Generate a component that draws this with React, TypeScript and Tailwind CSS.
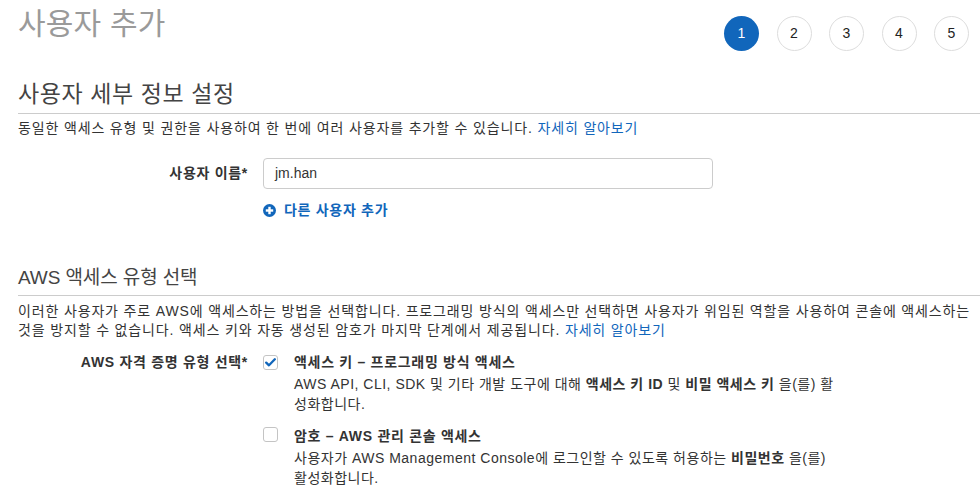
import React from 'react';

const BLUE = 'text-[#1166bb]';

function StepCircles() {
  return (
    <div className="mt-[16px] flex gap-[17.5px] pr-[11px] tracking-normal">
      {[1, 2, 3, 4, 5].map((n) => (
        <div
          key={n}
          className={
            n === 1
              ? 'flex h-[35px] w-[35px] items-center justify-center rounded-full bg-[#1166bb] text-[14px] text-white'
              : 'flex h-[35px] w-[35px] items-center justify-center rounded-full border border-[#dddddd] bg-white text-[14px] text-[#222]'
          }
        >
          {n}
        </div>
      ))}
    </div>
  );
}

function PlusCircle() {
  return (
    <svg width="13" height="13" viewBox="0 0 13 13" className="shrink-0">
      <circle cx="6.5" cy="6.5" r="6.5" fill="#1166bb" />
      <rect x="5.3" y="2.8" width="2.4" height="7.4" fill="#fff" />
      <rect x="2.8" y="5.3" width="7.4" height="2.4" fill="#fff" />
    </svg>
  );
}

function Checkbox({ checked }: { checked?: boolean }) {
  return (
    <div className="flex h-[15px] w-[15px] shrink-0 items-center justify-center rounded-[3px] border border-[#c4c4c4] bg-white">
      {checked && (
        <svg width="11" height="9" viewBox="0 0 11 9">
          <path d="M1.2 4.6 L4 7.3 L9.8 1.3" fill="none" stroke="#1166bb" strokeWidth="2.3" strokeLinecap="round" strokeLinejoin="round" />
        </svg>
      )}
    </div>
  );
}

export default function App() {
  return (
    <div className="min-h-[495px] w-[980px] overflow-hidden bg-white pl-[18px] font-['Liberation_Sans','Noto_Sans_CJK_KR',sans-serif] text-[14px] tracking-[0.7px] text-[#333]">
      {/* header with steps */}
      <div className="flex items-start justify-between">
        <h1 className="pt-[5px] text-[30px] leading-[38px] font-normal tracking-[0.2px] text-[#9a9a9a]">사용자 추가</h1>
        <StepCircles />
      </div>

      {/* user details */}
      <div className="mt-[28px] border-b border-[#cccccc] pb-[4px]">
        <h2 className="text-[23px] leading-[30px] tracking-[0.6px] text-[#444]">사용자 세부 정보 설정</h2>
      </div>
      <p className="mt-[4px] leading-[20px] tracking-[0.85px]">
        동일한 액세스 유형 및 권한을 사용하여 한 번에 여러 사용자를 추가할 수 있습니다.{' '}
        <a className={BLUE}>자세히 알아보기</a>
      </p>

      <div className="mt-[20px] flex items-center gap-[15px]">
        <label className="w-[230px] text-right font-bold text-[#333]">사용자 이름*</label>
        <div className="flex h-[31px] w-[450px] items-center rounded-[4px] border border-[#cccccc] px-[11px] text-[14px] tracking-normal text-[#333]">
          jm.han
        </div>
      </div>

      <div className="mt-[11px] flex items-center gap-[8px] pl-[245px] leading-[20px]">
        <PlusCircle />
        <span className={`${BLUE} font-bold`}>다른 사용자 추가</span>
      </div>

      {/* access type */}
      <div className="mt-[45px] border-b border-[#cccccc] pb-[4px]">
        <h2 className="text-[19px] leading-[26px] tracking-[-0.1px] text-[#444]">AWS 액세스 유형 선택</h2>
      </div>
      <p className="mt-[6px] leading-[19px] tracking-[0.85px] whitespace-nowrap">
        이러한 사용자가 주로 AWS에 액세스하는 방법을 선택합니다. 프로그래밍 방식의 액세스만 선택하면 사용자가 위임된 역할을 사용하여 콘솔에 액세스하는
        <br />
        것을 방지할 수 없습니다. 액세스 키와 자동 생성된 암호가 마지막 단계에서 제공됩니다. <a className={BLUE}>자세히 알아보기</a>
      </p>

      <div className="mt-[12px] flex items-start gap-[15px]">
        <div className="w-[230px] text-right leading-[20px] font-bold">AWS 자격 증명 유형 선택*</div>
        <div className="flex flex-col">
          <div className="flex items-start gap-[16px]">
            <div className="pt-[3px]">
              <Checkbox checked />
            </div>
            <div className="leading-[20px]">
              <div className="font-bold">액세스 키 – 프로그래밍 방식 액세스</div>
              <div className="mt-[2px] whitespace-nowrap tracking-[0.5px]">
                AWS API, CLI, SDK 및 기타 개발 도구에 대해 <b>액세스 키 ID</b> 및 <b>비밀 액세스 키</b> 을(를) 활
                <br />
                성화합니다.
              </div>
            </div>
          </div>
          <div className="mt-[12px] flex items-start gap-[16px]">
            <div className="pt-[1px]">
              <Checkbox />
            </div>
            <div className="leading-[20px]">
              <div className="font-bold">암호 – AWS 관리 콘솔 액세스</div>
              <div className="mt-[2px] whitespace-nowrap tracking-[0.5px]">
                사용자가 AWS Management Console에 로그인할 수 있도록 허용하는 <b>비밀번호</b> 을(를)
                <br />
                활성화합니다.
              </div>
            </div>
          </div>
        </div>
      </div>
    </div>
  );
}
